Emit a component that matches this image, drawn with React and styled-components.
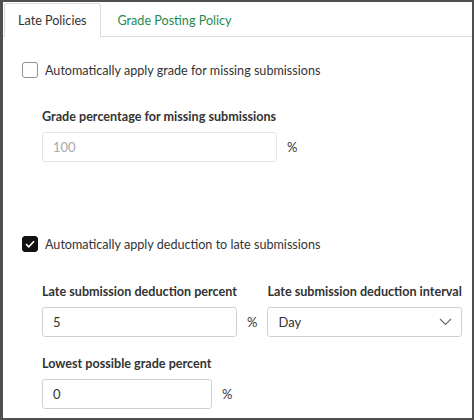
import React from "react";
import styled, { createGlobalStyle } from "styled-components";

const GlobalStyle = createGlobalStyle`
  body {
    margin: 0;
    background: #fff;
    font-family: Lato, "Open Sans", sans-serif;
    color: #333;
  }
`;

const Frame = styled.div`
  box-sizing: border-box;
  width: 474px;
  height: 420px;
  border: 2px solid #4f4f4f;
  border-left-width: 3px;
  background: #fff;
  overflow: hidden;
`;

const TabBar = styled.div`
  display: flex;
  align-items: flex-end;
  height: 34px;
  border-bottom: 1px solid #dcdcdc;
`;

const Tab = styled.div`
  box-sizing: border-box;
  height: ${p => (p.$active ? "34px" : "33px")};
  margin-left: ${p => (p.$active ? "1px" : "0")};
  margin-bottom: ${p => (p.$active ? "-1px" : "0")};
  padding: 0 ${p => (p.$active ? "13px" : "16px")};
  display: flex;
  align-items: center;
  font-size: 12.6px;
  color: ${p => (p.$active ? "#333" : "#1f8a4c")};
  background: #fff;
  border: 1px solid ${p => (p.$active ? "#dcdcdc" : "transparent")};
  border-bottom: none;
  border-radius: 3px 3px 0 0;
`;

const Panel = styled.div`
  display: flex;
  flex-direction: column;
  padding-left: 19px;
`;

const CheckRow = styled.label`
  display: flex;
  align-items: center;
  gap: 7px;
  height: 16px;
  margin-top: ${p => p.$top}px;
  font-size: 12.6px;
  color: #333;
`;

const Box = styled.span`
  box-sizing: border-box;
  width: 16px;
  height: 16px;
  border-radius: 3px;
  border: 1px solid ${p => (p.$checked ? "#111" : "#8e9296")};
  background: ${p => (p.$checked ? "#111" : "#fff")};
  display: flex;
  align-items: center;
  justify-content: center;
`;

const Fields = styled.div`
  display: flex;
  gap: 10px;
  margin-left: 20px;
  margin-top: ${p => p.$top}px;
`;

const Field = styled.div`
  display: flex;
  flex-direction: column;
  gap: 7px;
`;

const Label = styled.div`
  font-size: 12.6px;
  font-weight: 700;
  line-height: 16px;
  color: #333;
  white-space: nowrap;
`;

const InputRow = styled.div`
  display: flex;
  align-items: center;
  gap: 10px;
`;

const Input = styled.div`
  box-sizing: border-box;
  width: ${p => p.$w}px;
  height: 30px;
  padding: 0 10px;
  display: flex;
  align-items: center;
  font-size: 13px;
  color: ${p => (p.$muted ? "#a6a9ac" : "#333")};
  border: 1px solid ${p => (p.$muted ? "#e3e5e6" : "#cfd2d4")};
  border-radius: 3px;
  background: #fff;
`;

const Select = styled(Input)`
  justify-content: space-between;
  padding-right: 9px;
`;

const Unit = styled.span`
  font-size: 13px;
  color: #333;
`;

const Check = () => (
  <svg width="10" height="8" viewBox="0 0 10 8">
    <path d="M1 4.2 L3.8 6.8 L9 1.2" fill="none" stroke="#fff" strokeWidth="1.6" />
  </svg>
);

const Chevron = () => (
  <svg width="13" height="8" viewBox="0 0 13 8">
    <path d="M1 1 L6.5 6.5 L12 1" fill="none" stroke="#6b6f73" strokeWidth="1.2" />
  </svg>
);

const App = () => (
  <>
    <GlobalStyle />
    <Frame>
      <TabBar>
        <Tab $active>Late Policies</Tab>
        <Tab>Grade Posting Policy</Tab>
      </TabBar>
      <Panel>
        <CheckRow $top={25}>
          <Box />
          Automatically apply grade for missing submissions
        </CheckRow>
        <Fields $top={31}>
          <Field>
            <Label>Grade percentage for missing submissions</Label>
            <InputRow>
              <Input $w={235} $muted>100</Input>
              <Unit>%</Unit>
            </InputRow>
          </Field>
        </Fields>
        <CheckRow $top={74}>
          <Box $checked>
            <Check />
          </Box>
          Automatically apply deduction to late submissions
        </CheckRow>
        <Fields $top={32}>
          <Field>
            <Label>Late submission deduction percent</Label>
            <InputRow>
              <Input $w={195}>5</Input>
              <Unit>%</Unit>
            </InputRow>
          </Field>
          <Field>
            <Label>Late submission deduction interval</Label>
            <Select $w={195}>
              Day
              <Chevron />
            </Select>
          </Field>
        </Fields>
        <Fields $top={19}>
          <Field>
            <Label>Lowest possible grade percent</Label>
            <InputRow>
              <Input $w={170}>0</Input>
              <Unit>%</Unit>
            </InputRow>
          </Field>
        </Fields>
      </Panel>
    </Frame>
  </>
);

export default App;
